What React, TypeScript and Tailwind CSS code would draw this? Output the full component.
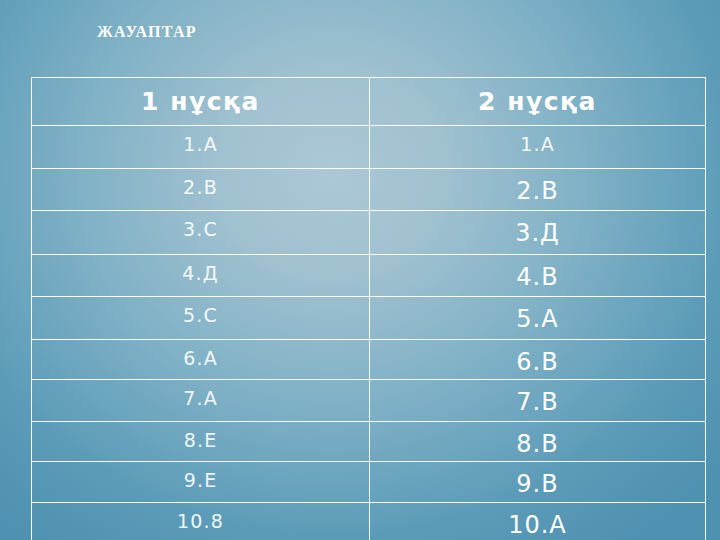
const rows: { a: string; b: string; big: boolean; h: string }[] = [
  { a: "1.А", b: "1.А", big: false, h: "h-[43px]" },
  { a: "2.В", b: "2.В", big: true, h: "h-[42px]" },
  { a: "3.С", b: "3.Д", big: true, h: "h-[44px]" },
  { a: "4.Д", b: "4.В", big: true, h: "h-[42px]" },
  { a: "5.С", b: "5.А", big: true, h: "h-[43px]" },
  { a: "6.А", b: "6.В", big: true, h: "h-[40px]" },
  { a: "7.А", b: "7.В", big: true, h: "h-[42px]" },
  { a: "8.Е", b: "8.В", big: true, h: "h-[40px]" },
  { a: "9.Е", b: "9.В", big: true, h: "h-[41px]" },
  { a: "10.8", b: "10.А", big: true, h: "h-[43px]" },
];

export default function App() {
  return (
    <div className="w-[720px] h-[540px] overflow-hidden bg-[radial-gradient(ellipse_70%_85%_at_46%_32%,#abc8d5_0%,#a0c1d0_22%,#80b1c6_50%,#5b9bb8_80%,#4f91b0_100%)] font-['DejaVu_Sans',sans-serif] text-white">
      <div className="pl-[97px] pt-[24px] h-[77px]">
        <h1 className="font-['Liberation_Serif',serif] font-bold text-[16px] tracking-[1.3px] leading-none">
          ЖАУАПТАР
        </h1>
      </div>
      <div className="ml-[31px] w-[675px] border-t border-l border-white">
        <div className="flex h-[48px]">
          <div className="w-[338px] flex items-center justify-center border-r border-b border-white text-[25px] font-bold tracking-[1.5px]">
            1 нұсқа
          </div>
          <div className="flex-1 flex items-center justify-center border-r border-b border-white text-[25px] font-bold tracking-[1.5px]">
            2 нұсқа
          </div>
        </div>
        {rows.map((r) => (
          <div key={r.a} className={`flex ${r.h}`}>
            <div className="w-[338px] flex justify-center pt-[9px] border-r border-b border-white text-[19px] text-white/90 tracking-[1.2px] leading-none">
              {r.a}
            </div>
            <div
              className={`flex-1 flex justify-center border-r border-b border-white leading-none ${
                r.big ? "pt-[10px] text-[24px] tracking-[1px]" : "pt-[9px] text-[19px] text-white/90 tracking-[1.2px]"
              }`}
            >
              {r.b}
            </div>
          </div>
        ))}
      </div>
    </div>
  );
}
